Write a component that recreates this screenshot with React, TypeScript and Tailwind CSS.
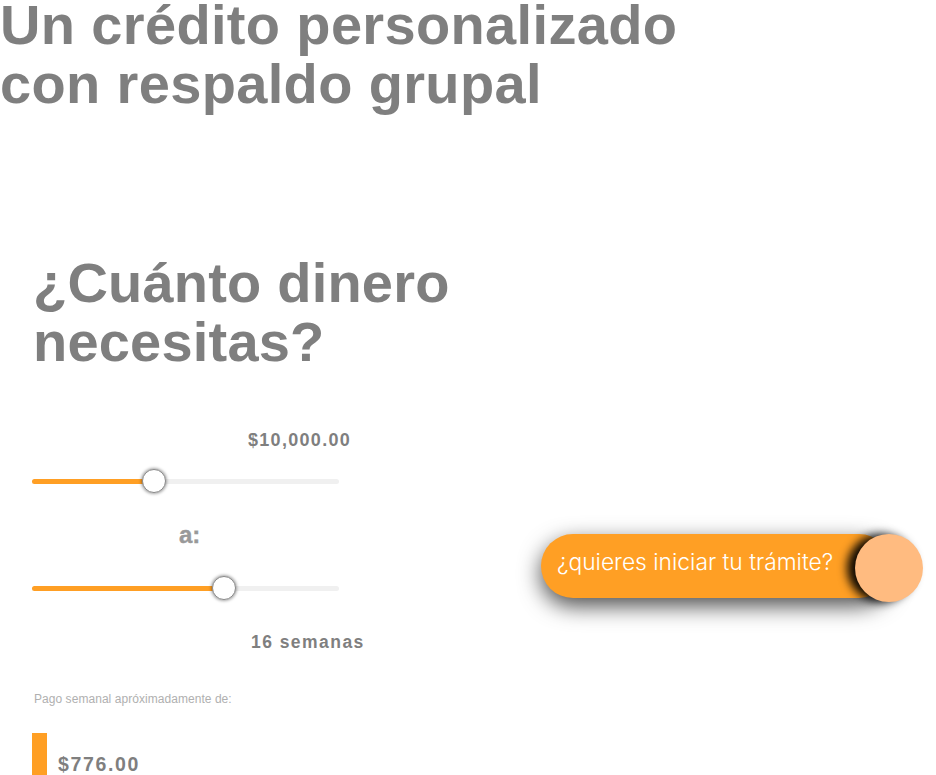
import React from "react";

const orange = "bg-[#ff9f24]";

function Slider({ pct }: { pct: number }) {
  return (
    <div className="relative h-[24px] w-[307px]">
      <div className="absolute left-0 right-0 top-[10px] h-[5px] rounded-full bg-[#f0f0f0]" />
      <div
        className={`absolute left-0 top-[10px] h-[5px] rounded-full ${orange}`}
        style={{ width: `${pct}px` }}
      />
      <div
        className="absolute top-0 h-[24px] w-[24px] rounded-full border border-[#8a8a8a] bg-white shadow-[0_0_3px_1px_rgba(0,0,0,0.35)]"
        style={{ left: `${pct - 12}px` }}
      />
    </div>
  );
}

export default function App() {
  return (
    <div
      className="relative h-[775px] w-[936px] overflow-hidden bg-white text-[#7f7f7f]"
      style={{ fontFamily: '"Liberation Sans", Arial, sans-serif' }}
    >
      <h1 className="text-[56px] font-bold leading-[49px] tracking-[0.35px]">
        <span className="block">Un crédito personalizado</span>
        <span className="mt-[10px] block">con respaldo grupal</span>
      </h1>

      <div className="mt-[145px] pl-[33px]">
        <h2 className="text-[56px] font-bold leading-[59px] tracking-[0.2px]">
          ¿Cuánto dinero
          <br />
          necesitas?
        </h2>
      </div>

      <div className="mt-[57px] flex">
        <div className="w-[541px] shrink-0 pl-[32px]">
          <div className="ml-[216px] text-[18px] font-bold leading-[24px] tracking-[1.3px]">
            $10,000.00
          </div>
          <div className="mt-[17px]">
            <Slider pct={122} />
          </div>
          <div className="ml-[147px] mt-[28px] text-[24px] font-bold leading-[28px] text-[#999999] [-webkit-text-stroke:0.4px_#999999]">
            a:
          </div>
          <div className="mt-[27px]">
            <Slider pct={192} />
          </div>
          <div className="ml-[219px] mt-[30px] text-[17.5px] font-bold leading-[24px] tracking-[1.45px]">
            16 semanas
          </div>
          <div className="ml-[2px] mt-[37px] text-[12px] leading-[16px] tracking-[0.05px] text-[#b0b0b0]">
            Pago semanal apróximadamente de:
          </div>
          <div className="mt-[26px] flex items-start">
            <div className={`h-[50px] w-[15px] ${orange}`} />
            <div className="ml-[11px] mt-[19px] text-[19.5px] font-bold leading-[24px] tracking-[1.65px]">
              $776.00
            </div>
          </div>
        </div>

        <div className="mt-[105px]">
          <div className="relative h-[68px] w-[382px]">
            <div
              className={`mt-[1px] flex h-[64px] w-[350px] items-center rounded-full ${orange} pb-[7px] pl-[16px] shadow-[0_8px_22px_rgba(0,0,0,0.7)]`}
            >
              <span
                className="text-[22.8px] font-light text-white"
                style={{ fontFamily: 'Inter, "Liberation Sans", sans-serif' }}
              >
                ¿quieres iniciar tu trámite?
              </span>
            </div>
            <div className="absolute right-0 top-0 h-[68px] w-[68px] rounded-full bg-[#ffbb80] shadow-[-8px_0_10px_rgba(0,0,0,0.95)]" />
          </div>
        </div>
      </div>
    </div>
  );
}
